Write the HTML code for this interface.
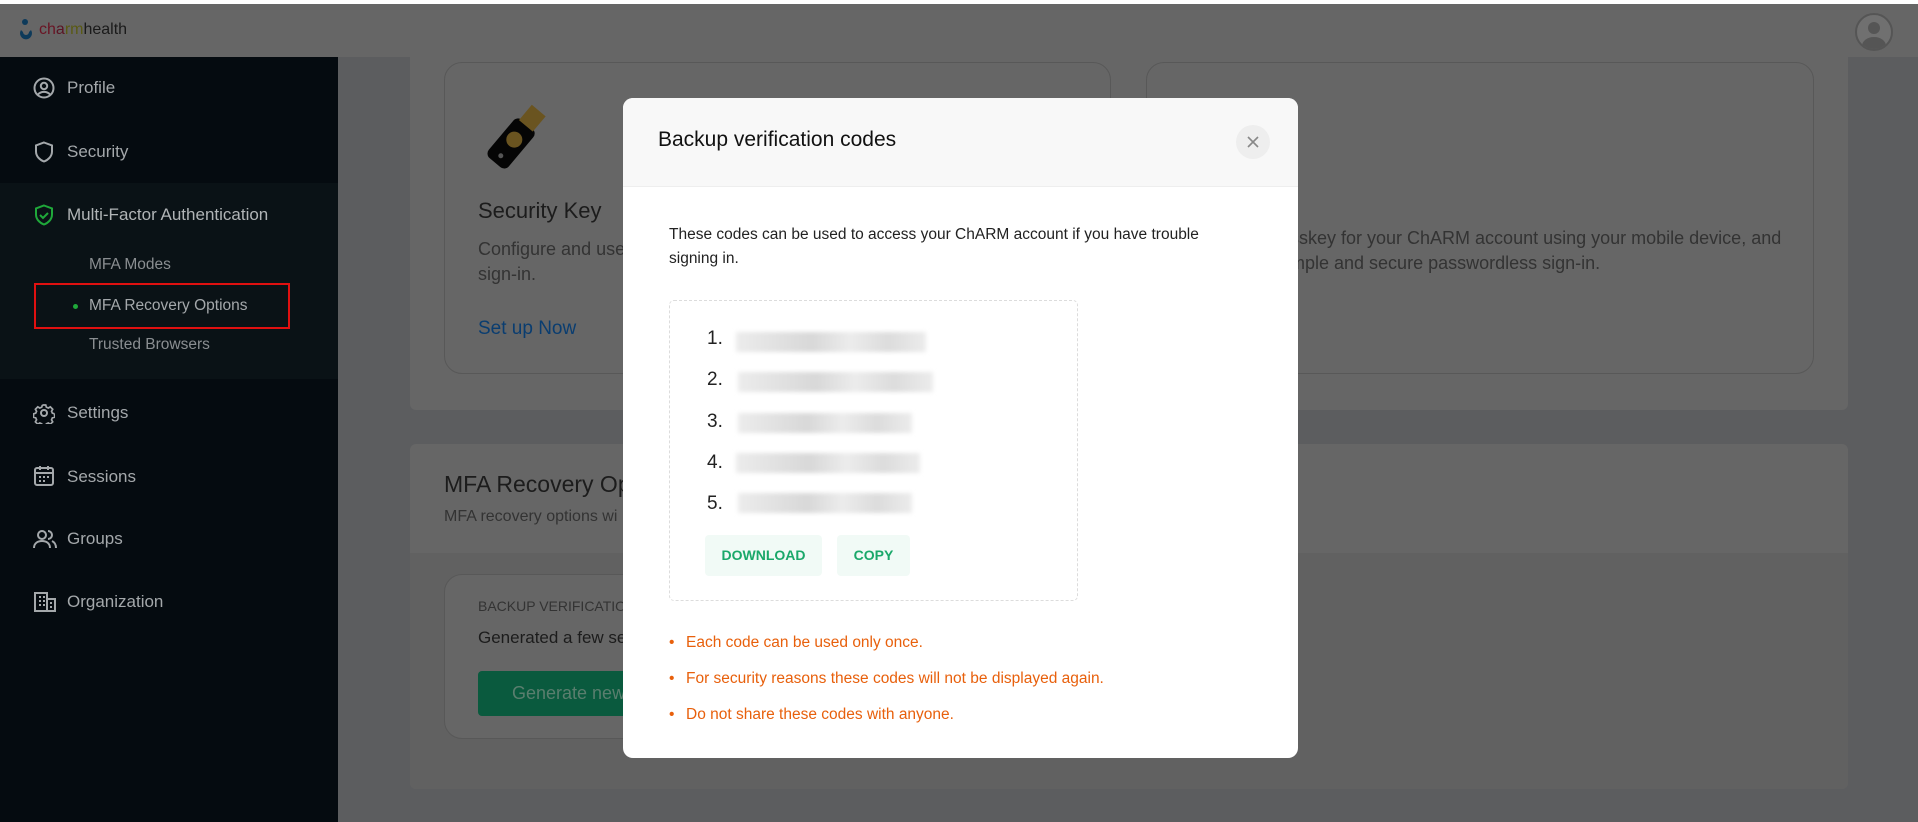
<!DOCTYPE html>
<html><head><meta charset="utf-8"><style>
*{box-sizing:border-box;margin:0;padding:0}
body{width:1918px;height:822px;overflow:hidden;background:#5c5d5f;font-family:"Liberation Sans",sans-serif;position:relative}
.abs{position:absolute}
#top{left:0;top:0;width:1918px;height:57px;background:#666;border-top:4px solid #fff}
#side{left:0;top:57px;width:338px;height:765px;background:#050b10}
.mi{position:absolute;left:67px;font-size:17px;color:#a4a8ab}
.ic{position:absolute;left:33px}
.sub{position:absolute;left:89px;font-size:15.5px;color:#8a8e91}
.card{background:#666;border-radius:6px}
.txt{color:#1c1c1c}
.blur{position:absolute;left:736px;height:20px;background:linear-gradient(90deg,#ececec,#d8d8d8 40%,#ececec 60%,#dcdcdc 80%,#ececec);filter:blur(2px)}
.num{position:absolute;left:707px;font-size:19px;color:#222}
.bul{position:absolute;left:669px;font-size:15.5px;color:#e8600c}
.bul:before{content:"•";position:absolute;left:0}
.bul span{margin-left:17px}
</style></head><body>
<div id="top" class="abs">
 <svg class="abs" style="left:17px;top:14px" width="20" height="26" viewBox="0 0 20 26"><circle cx="8" cy="4" r="3" fill="#0d3a5a"/><path d="M4 12a6 6 0 1 0 10 0l-2 2a3 3 0 1 1-6 0z" fill="#0d3a5a"/></svg>
 <div class="abs" style="left:39px;top:17px;font-size:16px;color:#1a1a1a"><span style="color:#6a1424">ch</span><span style="color:#5a1424">a</span><span style="color:#5a5a14">rm</span>health</div>
 <div class="abs" style="left:1855px;top:9px;width:38px;height:38px;border-radius:50%;background:#707070;border:2px solid #555;overflow:hidden"><div class="abs" style="left:11px;top:7px;width:12px;height:12px;border-radius:50%;background:#555"></div><div class="abs" style="left:5px;top:22px;width:24px;height:18px;border-radius:50%;background:#555"></div></div>
</div>
<div id="side" class="abs">
 <div class="abs" style="left:0;top:126px;width:338px;height:196px;background:#0a1216"></div>
 <svg class="ic" style="top:20px" width="22" height="22" viewBox="0 0 22 22" fill="none" stroke="#a4a8ab" stroke-width="2"><circle cx="11" cy="11" r="9.5"/><circle cx="11" cy="9" r="3.2"/><path d="M5 17.5c3-3.5 9-3.5 12 0"/></svg>
 <div class="mi" style="top:21px">Profile</div>
 <svg class="ic" style="top:84px" width="22" height="22" viewBox="0 0 22 22" fill="none" stroke="#a4a8ab" stroke-width="2"><path d="M11 1.5l8 3v6c0 5-4 8.5-8 10-4-1.5-8-5-8-10v-6z"/></svg>
 <div class="mi" style="top:85px">Security</div>
 <svg class="ic" style="top:147px" width="22" height="22" viewBox="0 0 22 22" fill="none" stroke="#1fa83a" stroke-width="2"><path d="M11 1.5l8 3v6c0 5-4 8.5-8 10-4-1.5-8-5-8-10v-6z"/><path d="M7 11l3 3 5-5"/></svg>
 <div class="mi" style="top:148px;color:#b0b4b6">Multi-Factor Authentication</div>
 <div class="sub" style="top:199px">MFA Modes</div>
 <div class="abs" style="left:34px;top:226px;width:256px;height:46px;border:2px solid #e01010"></div>
 <div class="abs" style="left:73px;top:247px;width:5px;height:5px;border-radius:50%;background:#1fa83a"></div>
 <div class="sub" style="top:240px;color:#a4a8ab">MFA Recovery Options</div>
 <div class="sub" style="top:279px">Trusted Browsers</div>
 <svg class="ic" style="top:345px" width="22" height="22" viewBox="0 0 22 22" fill="none" stroke="#a4a8ab" stroke-width="2"><circle cx="11" cy="11" r="3"/><path d="M9 1.5h4l.7 2.6 2.3 1 2.4-1.4 2.8 2.8-1.4 2.4 1 2.3 2.6.7v0M9 1.5l-.7 2.6-2.3 1-2.4-1.4-2.8 2.8 1.4 2.4-1 2.3-2.6.7v4l2.6.7 1 2.3-1.4 2.4 2.8 2.8 2.4-1.4 2.3 1 .7 2.6h4l.7-2.6 2.3-1 2.4 1.4 2.8-2.8-1.4-2.4 1-2.3 2.6-.7v-4" transform="scale(.85) translate(2 2)"/></svg>
 <div class="mi" style="top:346px">Settings</div>
 <svg class="ic" style="top:408px" width="22" height="22" viewBox="0 0 22 22" fill="none" stroke="#a4a8ab" stroke-width="2"><rect x="2" y="3" width="18" height="17" rx="2"/><path d="M2 8h18M7 1v4M15 1v4M6 12h2M10 12h2M14 12h2M6 16h2M10 16h2"/></svg>
 <div class="mi" style="top:410px">Sessions</div>
 <svg class="ic" style="top:471px" width="24" height="22" viewBox="0 0 24 22" fill="none" stroke="#a4a8ab" stroke-width="2"><circle cx="9" cy="7" r="4"/><path d="M1 20c0-5 4-7 8-7s8 2 8 7"/><path d="M15 3a4 4 0 0 1 0 8M19 13c2 1 4 3 4 7"/></svg>
 <div class="mi" style="top:472px">Groups</div>
 <svg class="ic" style="top:534px" width="24" height="22" viewBox="0 0 24 22" fill="none" stroke="#a4a8ab" stroke-width="2"><rect x="2" y="2" width="12" height="18"/><path d="M14 8h8v12H2M6 6h2M10 6h2M6 10h2M10 10h2M6 14h2M10 14h2M17 12h2M17 16h2"/></svg>
 <div class="mi" style="top:535px">Organization</div>
</div>
<div class="abs card" style="left:410px;top:57px;width:1438px;height:353px;border-radius:0 0 6px 6px"></div>
<div class="abs" style="left:444px;top:62px;width:667px;height:312px;border:1.5px solid #585858;border-radius:18px;background:#666"></div>
<div class="abs" style="left:1146px;top:62px;width:668px;height:312px;border:1.5px solid #585858;border-radius:18px;background:#666"></div>
<svg class="abs" style="left:472px;top:96px" width="90" height="84" viewBox="0 0 90 84"><g transform="rotate(-50 45 42)"><rect x="12" y="28" width="50" height="26" rx="6" fill="#050505"/><rect x="60" y="32" width="20" height="18" fill="#6a5420"/><circle cx="42" cy="41" r="8" fill="#6a5420"/><circle cx="21" cy="41" r="2.5" fill="#555"/></g></svg>
<div class="abs txt" style="left:478px;top:198px;font-size:22px">Security Key</div>
<div class="abs" style="left:478px;top:237px;font-size:18px;color:#333;line-height:25px">Configure and use<br>sign-in.</div>
<div class="abs" style="left:478px;top:318px;font-size:19px;color:#0a3d70">Set up Now</div>
<div class="abs" style="left:1290px;top:226px;font-size:18px;color:#333;line-height:25px">sskey for your ChARM account using your mobile device, and<br>mple and secure passwordless sign-in.</div>
<div class="abs card" style="left:410px;top:444px;width:1438px;height:345px"></div>
<div class="abs" style="left:410px;top:553px;width:1438px;height:236px;background:#616161;border-radius:0 0 6px 6px"></div>
<div class="abs txt" style="left:444px;top:471px;font-size:23px">MFA Recovery Op</div>
<div class="abs" style="left:444px;top:508px;font-size:16px;color:#333">MFA recovery options wi</div>
<div class="abs" style="left:444px;top:574px;width:400px;height:165px;border:1.5px solid #585858;border-radius:18px;background:#666"></div>
<div class="abs" style="left:478px;top:598px;font-size:14px;color:#333">BACKUP VERIFICATION</div>
<div class="abs txt" style="left:478px;top:628px;font-size:17px">Generated a few sec</div>
<div class="abs" style="left:478px;top:671px;width:200px;height:45px;background:#0a5a3e;border-radius:4px;color:#5a7e6e;font-size:18px;padding:12px 34px">Generate new c</div>
<div class="abs" style="left:623px;top:98px;width:675px;height:660px;background:#fff;border-radius:10px;overflow:hidden">
 <div class="abs" style="left:0;top:0;width:675px;height:89px;background:#f8f8f8;border-bottom:1px solid #eee"></div>
 <div class="abs" style="left:35px;top:30px;font-size:21px;color:#111">Backup verification codes</div>
 <div class="abs" style="left:613px;top:27px;width:34px;height:34px;border-radius:50%;background:#eeeeee"></div>
 <svg class="abs" style="left:624px;top:38px" width="12" height="12" viewBox="0 0 12 12" stroke="#888" stroke-width="1.6"><path d="M1 1l10 10M11 1L1 11"/></svg>
</div>
<div class="abs" style="left:669px;top:223px;font-size:15.5px;color:#222;line-height:24px">These codes can be used to access your ChARM account if you have trouble<br>signing in.</div>
<div class="abs" style="left:669px;top:300px;width:409px;height:301px;border:1.5px dashed #dcdcdc;border-radius:5px"></div>
<div class="num" style="top:328px">1.</div><div class="blur" style="top:332px;width:190px"></div>
<div class="num" style="top:369px">2.</div><div class="blur" style="top:372px;width:195px;left:738px"></div>
<div class="num" style="top:411px">3.</div><div class="blur" style="top:413px;width:174px;left:738px"></div>
<div class="num" style="top:452px">4.</div><div class="blur" style="top:453px;width:184px"></div>
<div class="num" style="top:493px">5.</div><div class="blur" style="top:493px;width:174px;left:738px"></div>
<div class="abs" style="left:705px;top:535px;width:117px;height:41px;background:#f1faf6;border-radius:4px;color:#1aa86a;font-size:14px;font-weight:bold;text-align:center;line-height:41px">DOWNLOAD</div>
<div class="abs" style="left:837px;top:535px;width:73px;height:41px;background:#f1faf6;border-radius:4px;color:#1aa86a;font-size:14px;font-weight:bold;text-align:center;line-height:41px">COPY</div>
<div class="bul" style="top:634px"><span>Each code can be used only once.</span></div>
<div class="bul" style="top:670px"><span>For security reasons these codes will not be displayed again.</span></div>
<div class="bul" style="top:706px"><span>Do not share these codes with anyone.</span></div>
</body></html>
